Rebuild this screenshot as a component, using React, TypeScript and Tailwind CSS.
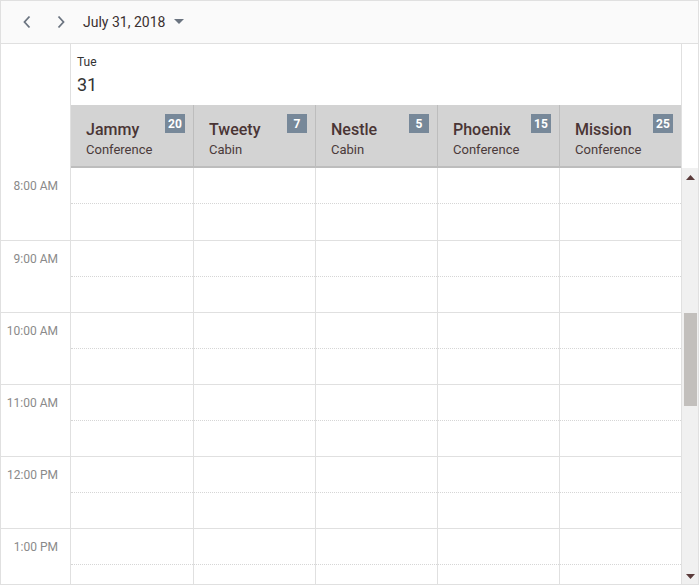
import React from "react";

const resources = [
  { name: "Jammy", type: "Conference", cap: 20 },
  { name: "Tweety", type: "Cabin", cap: 7 },
  { name: "Nestle", type: "Cabin", cap: 5 },
  { name: "Phoenix", type: "Conference", cap: 15 },
  { name: "Mission", type: "Conference", cap: 25 },
];

const times = ["8:00 AM", "9:00 AM", "10:00 AM", "11:00 AM", "12:00 PM", "1:00 PM"];

export default function App() {
  return (
    <div
      className="w-[699px] h-[585px] border border-[#e0e0e0] bg-white overflow-hidden flex flex-col text-[#333]"
      style={{ fontFamily: "Roboto, 'Liberation Sans', sans-serif" }}
    >
      {/* Toolbar */}
      <div className="h-[43px] shrink-0 bg-[#fafafa] border-b border-[#e0e0e0] flex items-center">
        <button className="w-[14px] h-[14px] ml-[19px] flex items-center justify-center">
          <svg width="10" height="14" viewBox="0 0 10 14">
            <path d="M7.5 1.5 L2.5 7 L7.5 12.5" fill="none" stroke="#6b7480" strokeWidth="1.8" />
          </svg>
        </button>
        <button className="w-[14px] h-[14px] ml-[20px] flex items-center justify-center">
          <svg width="10" height="14" viewBox="0 0 10 14">
            <path d="M2.5 1.5 L7.5 7 L2.5 12.5" fill="none" stroke="#6b7480" strokeWidth="1.8" />
          </svg>
        </button>
        <span className="ml-[15px] text-[14px] text-[#3b3030] leading-none">July 31, 2018</span>
        <svg className="ml-[9px]" width="10" height="6" viewBox="0 0 10 6">
          <path d="M0 0 L10 0 L5 5 Z" fill="#6b7480" />
        </svg>
      </div>

      {/* Header */}
      <div className="flex shrink-0">
        <div className="w-[70px] shrink-0 border-r border-[#e0e0e0] bg-white" />
        <div className="w-[611px] shrink-0 flex flex-col border-r border-[#e0e0e0]">
          <div className="h-[61px] pl-[6px] pt-[11px] bg-white">
            <div className="text-[12px] leading-[14px] text-[#333]">Tue</div>
            <div className="text-[18px] leading-[22px] mt-[5px] text-[#333]">31</div>
          </div>
          <div className="flex h-[63px] bg-[#d3d3d3] border-b-2 border-[#bdbdbd]">
            {resources.map((r, i) => (
              <div
                key={r.name}
                className={`relative pl-[15px] pt-[16px] ${i === 0 ? "w-[123px]" : i < 4 ? "w-[122px]" : "flex-1"} ${i < 4 ? "border-r border-[#bdbdbd]" : ""}`}
              >
                <div className="text-[16px] leading-[18px] font-medium text-[#4a3535]">{r.name}</div>
                <div className="text-[13px] leading-[16px] mt-[3px] text-[#4a3a3a]">{r.type}</div>
                <div className="absolute top-[9px] right-[8px] min-w-[20px] h-[19px] px-[3px] bg-[#778899] text-white text-[12px] font-bold flex items-center justify-center">
                  {r.cap}
                </div>
              </div>
            ))}
          </div>
        </div>
        <div className="flex-1 bg-white" />
      </div>

      {/* Body */}
      <div className="flex flex-1 min-h-0">
        <div className="w-[70px] shrink-0 border-r border-[#e0e0e0] flex flex-col">
          {times.map((t, i) => (
            <div
              key={t}
              className={`h-[72px] shrink-0 pr-[12px] pt-[11px] text-right text-[12px] leading-[14px] text-[#8a8a8a] ${i > 0 ? "border-t border-[#e0e0e0]" : ""}`}
            >
              {t}
            </div>
          ))}
        </div>
        <div className="w-[611px] shrink-0 flex border-r border-[#e0e0e0]">
          {resources.map((r, ci) => (
            <div
              key={r.name}
              className={`flex flex-col ${ci === 0 ? "w-[123px]" : ci < 4 ? "w-[122px]" : "flex-1"} ${ci < 4 ? "border-r border-[#e0e0e0]" : ""}`}
            >
              {times.map((t, i) => (
                <div key={t} className={`h-[72px] shrink-0 flex flex-col ${i > 0 ? "border-t border-[#e0e0e0]" : ""}`}>
                  <div className="h-[36px] border-b border-dotted border-[#d6d6d6]" />
                  <div className="flex-1" />
                </div>
              ))}
            </div>
          ))}
        </div>
        {/* Scrollbar */}
        <div className="flex-1 bg-[#f0f0f0] flex flex-col items-center">
          <svg className="mt-[7px]" width="9" height="5" viewBox="0 0 9 5">
            <path d="M0 5 L4.5 0 L9 5 Z" fill="#5a3a3a" />
          </svg>
          <div className="mt-[133px] w-[13px] h-[93px] bg-[#c2bfbc]" />
          <div className="flex-1" />
          <svg className="mb-[5px]" width="9" height="5" viewBox="0 0 9 5">
            <path d="M0 0 L9 0 L4.5 5 Z" fill="#5a3a3a" />
          </svg>
        </div>
      </div>
    </div>
  );
}
